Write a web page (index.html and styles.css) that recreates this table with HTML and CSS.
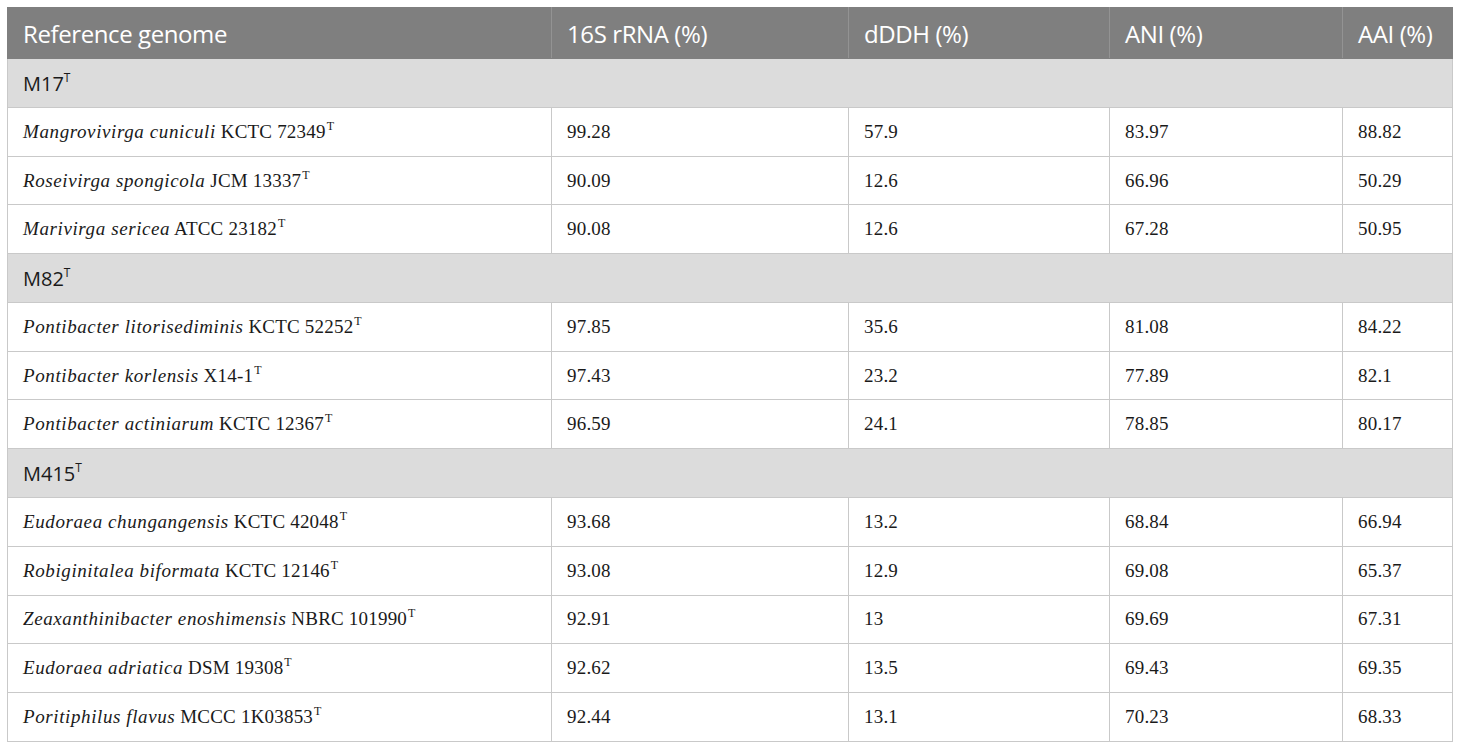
FILE: index.html
```html
<!DOCTYPE html>
<html>
<head>
<meta charset="utf-8">
<link rel="stylesheet" href="styles.css">
</head>
<body>
<table class="tbl">
  <colgroup>
    <col class="c1"><col class="c2"><col class="c3"><col class="c4"><col class="c5">
  </colgroup>
  <thead>
    <tr class="head">
      <th>Reference genome</th><th>16S rRNA (%)</th><th>dDDH (%)</th><th>ANI (%)</th><th>AAI (%)</th>
    </tr>
  </thead>
  <tbody>
    <tr class="sec"><td colspan="5">M17<sup>T</sup></td></tr>
    <tr class="row"><td><i>Mangrovivirga cuniculi</i> KCTC 72349<sup>T</sup></td><td>99.28</td><td>57.9</td><td>83.97</td><td>88.82</td></tr>
    <tr class="row"><td><i>Roseivirga spongicola</i> JCM 13337<sup>T</sup></td><td>90.09</td><td>12.6</td><td>66.96</td><td>50.29</td></tr>
    <tr class="row"><td><i>Marivirga sericea</i> ATCC 23182<sup>T</sup></td><td>90.08</td><td>12.6</td><td>67.28</td><td>50.95</td></tr>
    <tr class="sec"><td colspan="5">M82<sup>T</sup></td></tr>
    <tr class="row"><td><i>Pontibacter litorisediminis</i> KCTC 52252<sup>T</sup></td><td>97.85</td><td>35.6</td><td>81.08</td><td>84.22</td></tr>
    <tr class="row"><td><i>Pontibacter korlensis</i> X14-1<sup>T</sup></td><td>97.43</td><td>23.2</td><td>77.89</td><td>82.1</td></tr>
    <tr class="row"><td><i>Pontibacter actiniarum</i> KCTC 12367<sup>T</sup></td><td>96.59</td><td>24.1</td><td>78.85</td><td>80.17</td></tr>
    <tr class="sec"><td colspan="5">M415<sup>T</sup></td></tr>
    <tr class="row"><td><i>Eudoraea chungangensis</i> KCTC 42048<sup>T</sup></td><td>93.68</td><td>13.2</td><td>68.84</td><td>66.94</td></tr>
    <tr class="row"><td><i>Robiginitalea biformata</i> KCTC 12146<sup>T</sup></td><td>93.08</td><td>12.9</td><td>69.08</td><td>65.37</td></tr>
    <tr class="row"><td><i>Zeaxanthinibacter enoshimensis</i> NBRC 101990<sup>T</sup></td><td>92.91</td><td>13</td><td>69.69</td><td>67.31</td></tr>
    <tr class="row"><td><i>Eudoraea adriatica</i> DSM 19308<sup>T</sup></td><td>92.62</td><td>13.5</td><td>69.43</td><td>69.35</td></tr>
    <tr class="row"><td><i>Poritiphilus flavus</i> MCCC 1K03853<sup>T</sup></td><td>92.44</td><td>13.1</td><td>70.23</td><td>68.33</td></tr>
  </tbody>
</table>
</body>
</html>
```

FILE: styles.css
```css
html, body {
  margin: 0;
  padding: 0;
  background: #ffffff;
}
body {
  padding: 7px 8px 8px 7px;
}
.tbl {
  border-collapse: collapse;
  table-layout: fixed;
  width: 1445px;
}
.c1 { width: 544px; }
.c2 { width: 297px; }
.c3 { width: 261px; }
.c4 { width: 233px; }
.c5 { width: 110px; }

.tbl th, .tbl td {
  border: 1px solid #c9c9c9;
  padding: 0 10px 0 15px;
  text-align: left;
  vertical-align: middle;
  white-space: nowrap;
  overflow: hidden;
}
.head th {
  background: #7f7f7f;
  color: #ffffff;
  font-family: "Open Sans", "Liberation Sans", sans-serif;
  font-weight: 400;
  font-size: 24px;
  height: 50px;
  border-color: #7f7f7f #939393 #7f7f7f #939393;
  letter-spacing: -0.4px;
}
.head th:first-child { border-left-color: #7f7f7f; }
.head th:last-child { border-right-color: #7f7f7f; }

.sec td {
  background: #dcdcdc;
  color: #1a1a1a;
  font-family: "Open Sans", "Liberation Sans", sans-serif;
  font-size: 20px;
  height: 48px;
}
.sec sup {
  font-size: 12px;
  vertical-align: 9px;
  line-height: 0;
}
.row td {
  background: #ffffff;
  color: #1a1a1a;
  font-family: "Liberation Serif", "DejaVu Serif", serif;
  font-size: 19px;
  height: 47.7px;
  letter-spacing: 0.2px;
}
.row td:first-child {
  padding-left: 15px;
}
.row i {
  letter-spacing: 0.6px;
}
.row sup {
  font-size: 12px;
  vertical-align: 8px;
  line-height: 0;
  margin-left: 1px;
}
```
